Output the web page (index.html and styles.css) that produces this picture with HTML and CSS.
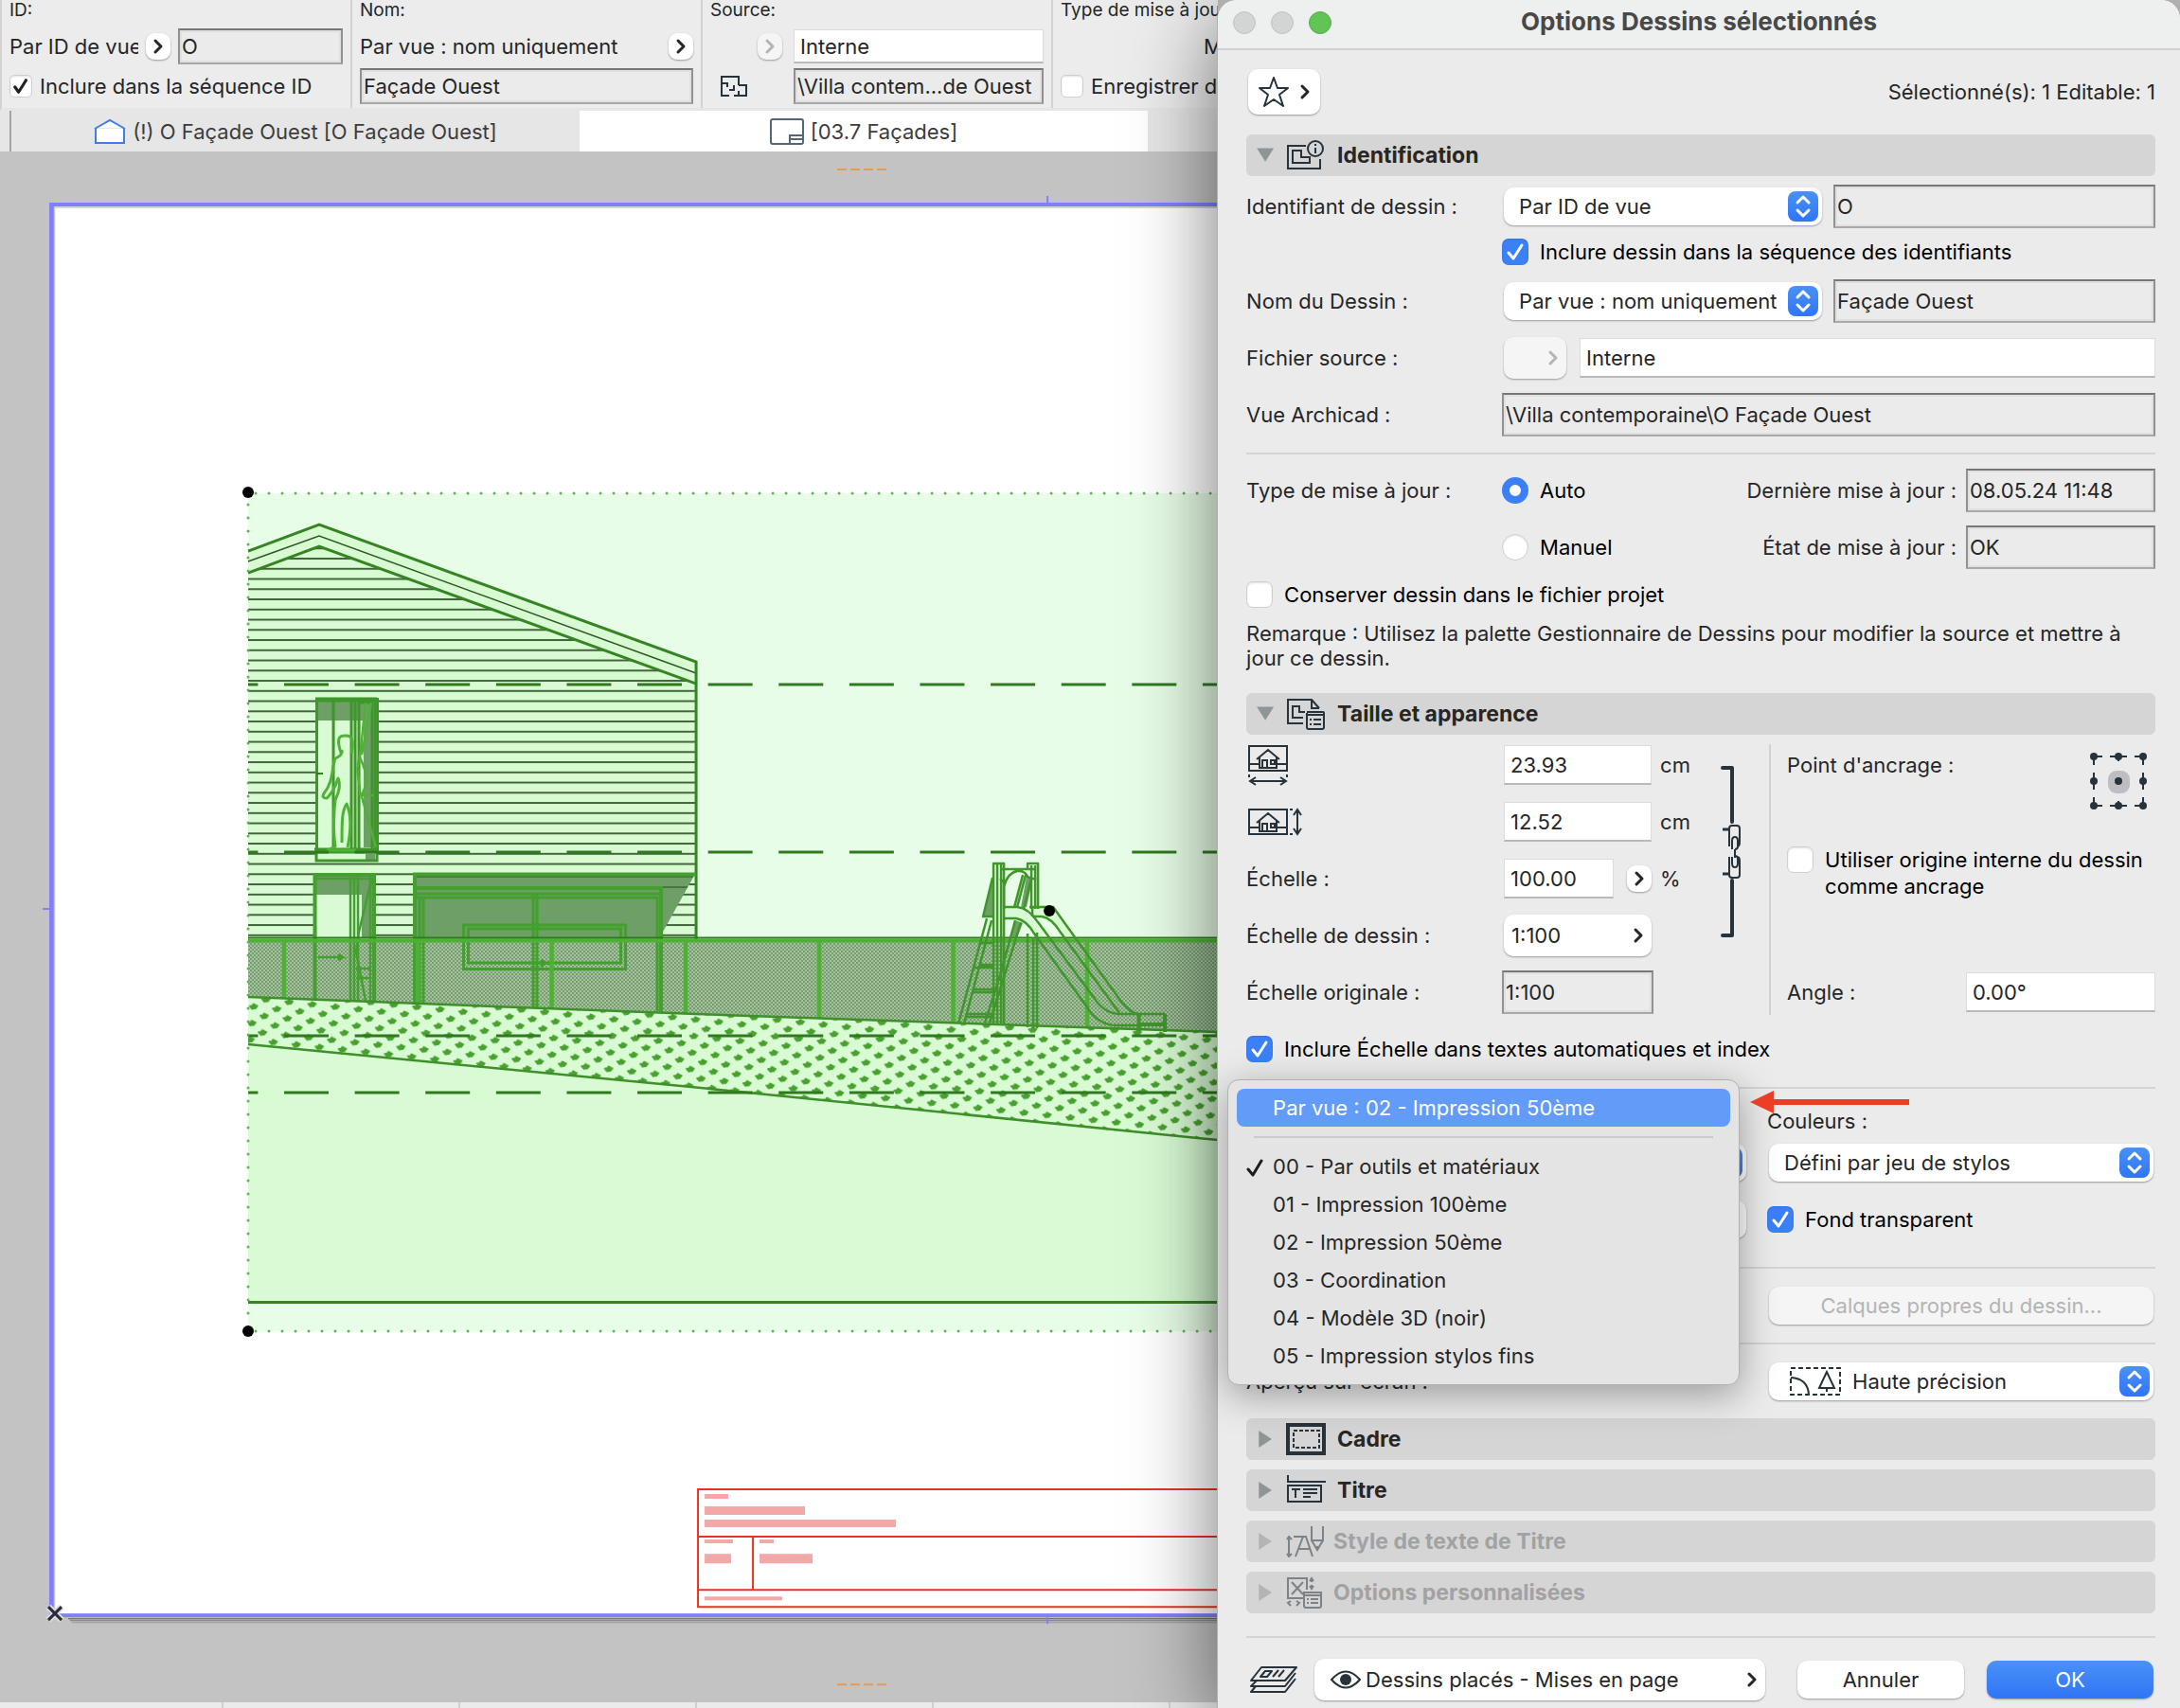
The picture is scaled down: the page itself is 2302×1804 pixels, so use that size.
FILE: index.html
```html
<!DOCTYPE html>
<html lang="fr">

<head>
    <meta charset="UTF-8">
    <meta name="viewport" content="width=device-width, initial-scale=1.0">
    <title>Options Dessins sélectionnés</title>
    <link rel="stylesheet" href="styles.css">
</head>

<body>
    <svg class="sprite" aria-hidden="true">
        <symbol id="chevron" viewBox="0 0 12 18">
            <path d="M3 3l6 6-6 6" fill="none" stroke="currentColor" stroke-width="3" stroke-linecap="round" stroke-linejoin="round" />
        </symbol>
        <symbol id="stepper" viewBox="0 0 32 32">
            <path d="M10 12l6-6 6 6M10 20l6 6 6-6" fill="none" stroke="#fff" stroke-width="3" stroke-linecap="round" stroke-linejoin="round" />
        </symbol>
        <symbol id="house" viewBox="0 0 42 28">
            <g fill="none" stroke="currentColor" stroke-width="2">
                <path d="M1 1h40v26H1zM1 20h10M31 20h10M9 15L21 5l12 10M12 13v11h18V13M15 24v-8h5v8M24 16h4v4h-4z" />
            </g>
        </symbol>
    </svg>

    <div class="app">
        <main class="workspace">
            <div class="infobar">
                <section class="info">
                    <h2>ID:</h2>
                    <div class="info-row">
                        <span class="info-text cut">Par ID de vue</span>
                        <button class="pill" aria-label="Choisir l'ID"><svg><use href="#chevron" /></svg></button>
                        <input class="sunken" type="text" value="O" aria-label="ID" readonly>
                    </div>
                    <label class="info-row">
                        <input class="check small dark" type="checkbox" checked>
                        <span>Inclure dans la séquence ID</span>
                    </label>
                </section>
                <section class="info">
                    <h2>Nom:</h2>
                    <div class="info-row">
                        <span class="info-text">Par vue : nom uniquement</span>
                        <button class="pill" aria-label="Choisir le nom"><svg><use href="#chevron" /></svg></button>
                    </div>
                    <div class="info-row">
                        <input class="sunken" type="text" value="Façade Ouest" aria-label="Nom" readonly>
                    </div>
                </section>
                <section class="info source">
                    <h2>Source:</h2>
                    <div class="info-row">
                        <button class="pill" aria-label="Choisir la source" disabled><svg><use href="#chevron" /></svg></button>
                        <input class="field" type="text" value="Interne" aria-label="Source">
                    </div>
                    <div class="info-row">
                        <svg class="plan-icon" viewBox="0 0 30 22">
                            <path d="M11 1H2v20h8M15 21h13V10h-8M15 1h5v9M11 1h4M2 8h6v4M15 10v5h-5M20 16v5" fill="none" stroke="#28323a" stroke-width="2" />
                        </svg>
                        <input class="sunken" type="text" value="\Villa contem...de Ouest" aria-label="Vue source" readonly>
                    </div>
                </section>
                <section class="info">
                    <h2>Type de mise à jour:</h2>
                    <div class="info-row update-kind">Manuel</div>
                    <label class="info-row">
                        <input class="check small" type="checkbox">
                        <span>Enregistrer dessin</span>
                    </label>
                </section>
            </div>

            <nav class="tabs">
                <a class="tab" href="#elevation">
                    <svg viewBox="0 0 34 28" width="34" height="28">
                        <path d="M2 10v16h30V10M1 11L17 2l16 9" fill="#fff" stroke="#3f7cf0" stroke-width="2" />
                    </svg>
                    (!) O Façade Ouest [O Façade Ouest]
                </a>
                <a class="tab active" href="#layout">
                    <svg viewBox="0 0 36 28" width="36" height="28">
                        <path d="M3 1h30q2 0 2 2v22q0 2-2 2H3q-2 0-2-2V3q0-2 2-2zM21 27v-9h14M21 22h14" fill="none" stroke="#536577" stroke-width="2" />
                    </svg>
                    [03.7 Façades]
                </a>
                <a class="tab" href="#more" aria-label="Onglet suivant"></a>
            </nav>

            <svg class="canvas" viewBox="0 160 1286 1638" preserveAspectRatio="xMinYMin slice" role="img" aria-label="Façade Ouest">
                <defs>
                    <pattern id="siding" width="20" height="10.75" patternUnits="userSpaceOnUse" y="589">
                        <rect width="20" height="2" fill="#41653a" />
                    </pattern>
                    <pattern id="mesh" width="4" height="4" patternUnits="userSpaceOnUse">
                        <rect width="4" height="4" fill="#a9cda2" />
                        <path d="M0 0h2v2H0zM2 2h2v2H2z" fill="#73936d" />
                    </pattern>
                    <pattern id="soil" width="24.5" height="17.6" patternUnits="userSpaceOnUse" patternTransform="translate(287 1061) rotate(6)">
                        <path id="tuft" d="M1 4l3-1 1-2 5 2-2 3-4 1z" fill="#49a02f" stroke="#49a02f" stroke-width="1" stroke-linejoin="round" />
                        <use href="#tuft" x="12.2" y="8.8" />
                    </pattern>
                    <clipPath id="wall">
                        <path d="M262 605L337 577 735 722V990H262z" />
                    </clipPath>
                </defs>

                <!-- sheet -->
                <rect x="52" y="214" width="1300" height="1494" fill="#8080fb" />
                <rect x="57" y="218" width="1300" height="1486" fill="#fff" />
                <path d="M57 219h1229M57.500 219V1700" stroke="#c8c8c8" stroke-width="1.500" fill="none" />
                <path d="M72 1709.500H1286" stroke="#5d5d5d" />
                <path d="M74 1711.500H1286" stroke="#777" />
                <path d="M76 1713.500H1286" stroke="#999" />
                <path d="M1106 207v7M1106 1708v7M45 960h7" stroke="#8080fb" stroke-width="2" />
                <path d="M884 179h52M884 1779h52" stroke="#e59a55" stroke-width="2" stroke-dasharray="10 4" />

                <!-- drawing area -->
                <rect x="262" y="521" width="1024" height="885" fill="#e8fde7" />
                <path d="M262 582L337 554 735 699V1071L1286 1090V1375H262z" fill="#d9fbd4" />

                <!-- house -->
                <rect x="262" y="570" width="473" height="420" fill="url(#siding)" clip-path="url(#wall)" />
                <path d="M262 593L337 566 735 711" fill="none" stroke="#2d5527" stroke-width="1.500" />
                <g fill="none" stroke="#368423" stroke-width="3">
                    <path d="M262 582L337 554 735 699V1071" />
                    <path d="M262 605L337 577 735 722" />
                </g>

                <!-- canopy and bay -->
                <path d="M438 923H734L700 984V994H438z" fill="#6e9f66" />
                <path d="M438 926H732M438 937H726" stroke="#3f6a37" stroke-width="1.500" />

                <!-- upper window -->
                <path d="M333 737h65v173h-65z" fill="#d9fbd4" />
                <path d="M335 740h62v21h-62zM384 761h12v134h-12zM386 902h10v7h-10z" fill="#6e9f66" />
                <g fill="none" stroke="#3f962b" stroke-width="3">
                    <path d="M334.500 738h62v162h-62zM334 900v9h64v-9M352 738v162M371 738v162M375 738v162M379 742v155h14V742zM333 740h64M332 897h65" />
                    <path d="M398 737v163" stroke-width="4" />
                </g>
                <g fill="none" stroke="#4fb236" stroke-width="3" stroke-linejoin="round">
                    <path d="M360 795C355 780 358 777 364 777C372 776 374 782 371 796M361 792Q362 798 354 801C350 812 352 826 342 838Q339 843 345 843Q352 837 357 822Q361 830 354 845C352 862 352 880 354 894L346 898H376M361 890C361 868 361 856 366 849C372 862 370 880 367 895" />
                    <path d="M380 798C374 815 381 825 380 840M382 797L392 742M381 838L397 895M380 800Q390 822 386 830L382 840H394M386 742L380 800" stroke-width="2.500" />
                </g>
                <path d="M334 817h7" stroke="#2f7a1e" stroke-width="2" />

                <!-- lower door -->
                <path d="M331 922h65v70h-65z" fill="#d9fbd4" />
                <path d="M334 925h61v20h-61zM382 945h12v46h-12z" fill="#6e9f66" />

                <!-- fence mesh -->
                <path d="M262 992H1286V1090L735 1071 262 1053z" fill="url(#mesh)" />

                <g fill="none" stroke="#43a02e" stroke-width="4">
                    <path d="M332.500 1055V924H395V1058" />
                    <path d="M334 928h60M370 924V1057M374 924V1057M378 926V1057M391 926V1057" stroke-width="2.500" />
                    <path d="M392 930L379 984 376 1005 386 1057M376 1023h16M376 1033h16M336 1011h26l-5-3m5 3l-5 3" stroke-width="2.500" />
                    <path d="M438 1060V923.500H735M438 938H698V1070" />
                    <path d="M440 944H697M440 948H694V1068M447 948V1062M563 944V1064M567 944V1064M443 948V1062" stroke-width="3" />
                    <path d="M489.500 977H660.500V1023.500H489.500zM494.500 981H655.500V1017H494.500z" stroke-width="3" />
                    <path d="M560 1017h16l-5-3m5 3l-5 4" stroke-width="3" />
                </g>

                <path d="M262 990.500H1286" stroke="#2f7a1e" stroke-width="2" />
                <path d="M262 993.500H1286" stroke="#4db234" stroke-width="4" />
                <path d="M300 993V1056M441 993V1062M582.500 993V1067M724 993V1072M865 993V1077M1006.500 993V1082M1148 993V1087" stroke="#4db234" stroke-width="4.500" />

                <!-- soil -->
                <path d="M262 1053L735 1071 1286 1090V1204L740 1149 262 1103z" fill="#d9fbd4" />
                <path d="M262 1053L735 1071 1286 1090V1204L740 1149 262 1103z" fill="url(#soil)" />
                <path d="M262 1053L735 1071 1286 1090M1286 1204L740 1149 262 1103" fill="none" stroke="#3f8f2a" stroke-width="2.500" />
                <path d="M262 1375.500H1286" stroke="#368423" stroke-width="3" />
                <path d="M262 723H1286M262 900H1286M262 1094H1286M262 1154H1286" stroke="#2f7a1e" stroke-width="3" stroke-dasharray="47 27.600" stroke-dashoffset="36.600" />

                <!-- playground slide -->
                <path d="M1048 928L1038 968H1048zM1084 925L1078 958H1084L1090 930zM1073 972L1068 990H1074L1080 975z" fill="#6e9f66" />
                <path d="M1060 958H1074Q1086 959 1096 974L1107 989H1093Q1083 971 1060 970zM1090 959H1114L1134 989H1123Q1106 968 1090 967z" fill="#d9fbd4" />
                <g fill="none" stroke="#3f962b" stroke-width="2.500" stroke-linejoin="round">
                    <path d="M1049 1082V912H1060V1083M1053 912V1082M1057 912V1083M1085 986V1085M1091 990V1086M1095 985V1086M1085 918V912H1096V960M1089 914V960M1093 914V960" />
                    <path d="M1057 918H1094M1056 928L1060 932V960M1060 936Q1064 922 1074 920Q1082 919 1085 926L1094 929" />
                    <path d="M1048 927L1038 968H1049M1042 970L1012 1081M1047 972L1018 1081M1034 996H1048M1034 1020H1048M1028 1022H1048M1036 1019H1048M1028 1045H1048M1026 1048H1048M1022 1071H1048M1021 1074H1048" />
                    <path d="M1083 924L1074 958M1089 928L1081 960M1080 924L1071 958M1078 974L1060 1032 1045 1080M1072 972L1056 1030 1040 1080" />
                    <path d="M1060 958H1074Q1086 959 1096 974L1156 1055Q1166 1070 1182 1071H1230" />
                    <path d="M1060 970H1073Q1084 972 1092 986L1148 1064Q1160 1083 1180 1083H1204" />
                    <path d="M1087 958H1112L1184 1058Q1194 1070 1204 1072M1090 968H1100Q1110 969 1120 985L1182 1070M1090 958V968" />
                    <path d="M1202.500 1071V1089M1230 1071V1090M1202 1082H1230" stroke-width="4" />
                </g>

                <path d="M270 521H1286M262 533V1400M270 1406H1286" stroke="#62b257" stroke-width="3" stroke-linecap="round" stroke-dasharray="0 14" />
                <g>
                    <circle cx="262" cy="520" r="6" />
                    <circle cx="1108" cy="962" r="6" />
                    <circle cx="262" cy="1406" r="6" />
                </g>

                <!-- title block -->
                <path d="M1286 1573H737V1697H1286M737 1623H1286M737 1679H1286M795 1623V1679" fill="none" stroke="#e93323" stroke-width="2" />
                <path d="M744 1578h25v5h-25zM744 1591h106v9h-106zM744 1605h202v8h-202zM744 1626h30v4h-30zM802 1626h15v4h-15zM744 1641h28v10h-28zM802 1641h56v10h-56zM744 1686h82v4h-82z" fill="#f1a8a6" />

                <path d="M51 1697l14 14M65 1697l-14 14" stroke="#ddd" stroke-width="7" />
                <path d="M51 1697l14 14M65 1697l-14 14" stroke="#2b2b40" stroke-width="3" />
            </svg>

            <div class="statusbar"><span></span><span></span><span></span><span></span><span></span></div>
        </main>

        <section class="dialog" role="dialog" aria-labelledby="dialog-title">
            <header class="titlebar">
                <div class="lights"><i></i><i></i><i class="on"></i></div>
                <h1 id="dialog-title">Options Dessins sélectionnés</h1>
            </header>

            <form class="content">
                <div class="top">
                    <button type="button" class="favorite" aria-label="Favoris">
                        <svg width="34" height="34" viewBox="0 0 34 34">
                            <path d="M17 2l4 11h11l-9 7 4 12-10-7-10 7 4-12-9-7h11z" fill="none" stroke="#28323a" stroke-width="2" stroke-linejoin="round" />
                        </svg>
                        <svg class="chev"><use href="#chevron" /></svg>
                    </button>
                    <span>Sélectionné(s): 1 Editable: 1</span>
                </div>

                <h2 class="panel-head open">
                    <i class="tri"></i>
                    <svg viewBox="0 0 42 34">
                        <path d="M21 7H2v24h34V21M7 12h9v7h9v6H7z" fill="none" stroke="#28323a" stroke-width="2" />
                        <circle cx="31" cy="10" r="8" fill="none" stroke="#28323a" stroke-width="2" />
                        <path d="M31 9v6M31 5v2" stroke="#28323a" stroke-width="2" />
                    </svg>
                    Identification
                </h2>
                <div class="group first">
                    <div class="row">
                        <label for="ident">Identifiant de dessin :</label>
                        <div class="pair">
                            <span class="select"><select id="ident"><option>Par ID de vue</option></select><svg><use href="#stepper" /></svg></span>
                            <input class="sunken" type="text" value="O" aria-label="Identifiant" readonly>
                        </div>
                    </div>
                    <div class="row short">
                        <label class="inline second"><input class="check" type="checkbox" checked>Inclure dessin dans la séquence des identifiants</label>
                    </div>
                    <div class="row">
                        <label for="nom">Nom du Dessin :</label>
                        <div class="pair">
                            <span class="select"><select id="nom"><option>Par vue : nom uniquement</option></select><svg><use href="#stepper" /></svg></span>
                            <input class="sunken" type="text" value="Façade Ouest" aria-label="Nom" readonly>
                        </div>
                    </div>
                    <div class="row">
                        <label for="fichier">Fichier source :</label>
                        <div class="file">
                            <button type="button" class="push" aria-label="Choisir le fichier" disabled><svg class="chev"><use href="#chevron" /></svg></button>
                            <input id="fichier" class="field" type="text" value="Interne">
                        </div>
                    </div>
                    <div class="row">
                        <label for="vue">Vue Archicad :</label>
                        <input id="vue" class="sunken" type="text" value="\Villa contemporaine\O Façade Ouest" readonly>
                    </div>
                </div>
                <hr>
                <div class="group">
                    <div class="row update">
                        <span>Type de mise à jour :</span>
                        <label class="inline"><input class="radio" type="radio" name="maj" checked>Auto</label>
                        <label class="end" for="derniere">Dernière mise à jour :</label>
                        <input id="derniere" class="sunken" type="text" value="08.05.24 11:48" readonly>
                    </div>
                    <div class="row update">
                        <label class="inline second"><input class="radio" type="radio" name="maj">Manuel</label>
                        <label class="end" for="etat">État de mise à jour :</label>
                        <input id="etat" class="sunken" type="text" value="OK" readonly>
                    </div>
                    <label class="inline keep"><input class="check" type="checkbox">Conserver dessin dans le fichier projet</label>
                    <p class="note">Remarque : Utilisez la palette Gestionnaire de Dessins pour modifier la source et mettre à jour ce dessin.</p>
                </div>

                <h2 class="panel-head open">
                    <i class="tri"></i>
                    <svg viewBox="0 0 42 34">
                        <path d="M18 27H2V2h25l8 9M27 2v9h8M18 21H7V9h7v6h6M22 15h17q1 0 1 1v15q0 2-2 2H24q-2 0-2-2V16M22 18h18M25 23h2M25 28h2M29 23h8M29 28h8" fill="none" stroke="#28323a" stroke-width="2" />
                    </svg>
                    Taille et apparence
                </h2>
                <div class="size">
                    <div class="size-rows">
                        <div class="row">
                            <label for="largeur" aria-label="Largeur">
                                <svg class="dim" width="46" height="46" viewBox="0 0 46 46">
                                    <use href="#house" x="2" y="2" width="42" height="28" />
                                    <path d="M3 33v3M43 33v3M5 40h36M10 36l-6 4 6 4M36 36l6 4-6 4" fill="none" stroke="currentColor" stroke-width="2" />
                                </svg>
                            </label>
                            <div class="value"><input id="largeur" class="field" type="text" value="23.93"><span>cm</span></div>
                        </div>
                        <div class="row">
                            <label for="hauteur" aria-label="Hauteur">
                                <svg class="dim" width="62" height="30" viewBox="0 0 62 30">
                                    <use href="#house" x="2" y="1" width="42" height="28" />
                                    <path d="M46 2h3M46 28h3M54 3v24M50 8l4-6 4 6M50 22l4 6 4-6" fill="none" stroke="currentColor" stroke-width="2" />
                                </svg>
                            </label>
                            <div class="value"><input id="hauteur" class="field" type="text" value="12.52"><span>cm</span></div>
                        </div>
                        <div class="row">
                            <label for="echelle">Échelle :</label>
                            <div class="value">
                                <input id="echelle" class="field narrow" type="text" value="100.00">
                                <button type="button" class="pill" aria-label="Choisir l'échelle"><svg><use href="#chevron" /></svg></button>
                                <span>%</span>
                            </div>
                        </div>
                        <div class="row">
                            <label for="echelle-dessin">Échelle de dessin :</label>
                            <button type="button" id="echelle-dessin" class="push scale">1:100<svg class="chev"><use href="#chevron" /></svg></button>
                        </div>
                        <div class="row">
                            <label for="originale">Échelle originale :</label>
                            <input id="originale" class="sunken scale" type="text" value="1:100" readonly>
                        </div>
                    </div>
                    <svg class="bracket" width="40" height="300" viewBox="0 0 40 300">
                        <g fill="none" stroke="#28323a">
                            <path d="M13 33h10v57M23 152v58H13" stroke-width="4" stroke-linejoin="round" stroke-linecap="round" />
                            <path d="M20 116V97q0-3 3-3h5q3 0 3 3v15q0 4-3 4M23 119v-9q0-4 3-4t3 4v6q0 3-3 3M26 119v9M20 127v19q0 3 3 3h5q3 0 3-3v-15q0-4-3-4M23 127v7q0 4 3 4t3-4v-5q0-3-3-3" stroke-width="2" />
                            <path d="M13 98h6M13 145h6" stroke-width="3" />
                        </g>
                    </svg>
                    <div class="anchor">
                        <div class="anchor-row">
                            <span>Point d'ancrage :</span>
                            <svg width="62" height="62" viewBox="0 0 62 62">
                                <rect x="20" y="20" width="23" height="24" rx="9" fill="#bdbdc2" />
                                <g fill="#28323a">
                                    <circle cx="5" cy="5" r="4" /><circle cx="31" cy="5" r="4" /><circle cx="57" cy="5" r="4" />
                                    <circle cx="5" cy="31" r="4" /><circle cx="31" cy="31" r="4" /><circle cx="57" cy="31" r="4" />
                                    <circle cx="5" cy="57" r="4" /><circle cx="31" cy="57" r="4" /><circle cx="57" cy="57" r="4" />
                                </g>
                                <path d="M5 5h9M22 5h18M48 5h9M5 57h9M22 57h18M48 57h9M5 5v9M5 22v18M5 48v9M57 5v9M57 22v18M57 48v9M31 5v5M31 52v5" stroke="#28323a" stroke-width="2" />
                            </svg>
                        </div>
                        <label class="inline origin"><input class="check" type="checkbox"><span>Utiliser origine interne du dessin comme ancrage</span></label>
                        <div class="angle">
                            <label for="angle">Angle :</label>
                            <input id="angle" class="field" type="text" value="0.00°">
                        </div>
                    </div>
                </div>
                <label class="inline include"><input class="check" type="checkbox" checked>Inclure Échelle dans textes automatiques et index</label>
                <hr>

                <div class="pens">
                    <div class="pens-left">
                        <span class="select"><select aria-label="Jeu de stylos"></select><svg><use href="#stepper" /></svg></span>
                        <button type="button" class="push" aria-label="Modifier les stylos"></button>
                        <div class="menu" role="menu">
                            <button type="button" class="selected" role="menuitem">Par vue : 02 - Impression 50ème</button>
                            <hr>
                            <button type="button" role="menuitem">
                                <svg width="20" height="20" viewBox="0 0 20 20"><path d="M3 11l5 6 9-15" fill="none" stroke="#1d1d1d" stroke-width="3" stroke-linecap="round" stroke-linejoin="round" /></svg>
                                00 - Par outils et matériaux</button>
                            <button type="button" role="menuitem">01 - Impression 100ème</button>
                            <button type="button" role="menuitem">02 - Impression 50ème</button>
                            <button type="button" role="menuitem">03 - Coordination</button>
                            <button type="button" role="menuitem">04 - Modèle 3D (noir)</button>
                            <button type="button" role="menuitem">05 - Impression stylos fins</button>
                        </div>
                        <svg class="arrow" width="170" height="26" viewBox="0 0 170 26">
                            <path d="M0 13L25 1v9h143v6H25v9z" fill="#ea3f25" />
                        </svg>
                    </div>
                    <div class="pens-right">
                        <label for="couleurs">Couleurs :</label>
                        <div class="row">
                            <span class="select"><select id="couleurs"><option>Défini par jeu de stylos</option></select><svg><use href="#stepper" /></svg></span>
                        </div>
                        <label class="inline row"><input class="check" type="checkbox" checked>Fond transparent</label>
                    </div>
                </div>
                <hr>
                <div class="half">
                    <button type="button" class="push layers" disabled>Calques propres du dessin...</button>
                </div>
                <hr>
                <div class="half">
                    <label for="apercu">Aperçu sur écran :</label>
                    <span class="select with-icon">
                        <select id="apercu"><option>Haute précision</option></select>
                        <svg class="preview" viewBox="0 0 54 30">
                            <path d="M1 1h52v28H1z" fill="none" stroke="#28323a" stroke-width="2" stroke-dasharray="5 3" />
                            <path d="M1 11q18 1 19 18M39 5l-8 17h16zM39 22v4" fill="none" stroke="#28323a" stroke-width="2" />
                        </svg>
                        <svg><use href="#stepper" /></svg>
                    </span>
                </div>

                <div class="closed">
                    <h2 class="panel-head">
                        <i class="tri"></i>
                        <svg viewBox="0 0 42 34">
                            <path d="M2 2h38v30H2z" fill="none" stroke="#28323a" stroke-width="4" />
                            <path d="M8 8h27v18H8z" fill="none" stroke="#28323a" stroke-width="2" stroke-dasharray="4 2" />
                        </svg>
                        Cadre
                    </h2>
                    <h2 class="panel-head">
                        <i class="tri"></i>
                        <svg viewBox="0 0 42 34">
                            <path d="M2 1v7h40M2 12h35v17H2zM6 16h9M10 16v9M18 16h15M18 20h15M18 24h8" fill="none" stroke="#28323a" stroke-width="2" />
                        </svg>
                        Titre
                    </h2>
                    <h2 class="panel-head off">
                        <i class="tri"></i>
                        <svg viewBox="0 0 42 34">
                            <path d="M3 12v21M1 15l2-3 3 3M1 30l2 3 3-3M8 12h10M10 33l8-21h3l7 21M13 25h12M27 1v15l6 10 6-10V1M27 16h12M33 22v4" fill="none" stroke="#28323a" stroke-width="2" />
                        </svg>
                        Style de texte de Titre
                    </h2>
                    <h2 class="panel-head off">
                        <i class="tri"></i>
                        <svg viewBox="0 0 42 34">
                            <path d="M18 23H2V2h20v12M6 6l12 13M18 6L6 19M27 2v4M27 9v4M25 5l2-3 2 3M25 10l2 3 2-3M19 17h18v14q0 2-2 2H21q-2 0-2-2zM19 20h18M22 24h2M22 28h2M26 24h8M26 28h8M5 26l-3 2 3 3M11 26l3 2-3 3" fill="none" stroke="#28323a" stroke-width="2" />
                        </svg>
                        Options personnalisées
                    </h2>
                </div>
                <hr>

                <footer class="actions">
                    <svg class="sheets" width="52" height="30" viewBox="0 0 52 30">
                        <path d="M13 2h37L38 16H2zM8 16l-6 6h36l11-14M7 22l-5 6h36l11-14M17 6h7l-5 6h-7zM31 5l-6 7M37 5l-6 7" fill="none" stroke="#28323a" stroke-width="2" stroke-linejoin="round" />
                    </svg>
                    <button type="button" class="push view">
                        <svg width="34" height="20" viewBox="0 0 34 20">
                            <path d="M2 10Q17-7 32 10Q17 27 2 10z" fill="none" stroke="#28323a" stroke-width="2" />
                            <circle cx="17" cy="10" r="6" fill="#28323a" />
                        </svg>
                        Dessins placés - Mises en page
                        <svg class="chev"><use href="#chevron" /></svg>
                    </button>
                    <button type="button" class="push cancel">Annuler</button>
                    <button type="submit" class="push primary">OK</button>
                </footer>
            </form>
        </section>
    </div>
</body>

</html>
```
FILE: styles.css
```css
* {
    padding: 0;
    margin: 0;
    box-sizing: border-box;
}

body {
    height: 100vh;
    overflow: hidden;
    background-color: #c3c3c3;
    color: #262626;
    font-family: Inter, "Liberation Sans", sans-serif;
    font-size: 22px;
    line-height: 28px;
}

input,
select,
button {
    font: inherit;
    color: inherit;
}

.sprite {
    display: none;
}

.app {
    height: 100%;
    display: grid;
    grid-template-columns: minmax(0, 633fr) minmax(0, 500fr);
}

/* shared controls */
.sunken,
.field {
    width: 100%;
    min-width: 0;
    border-radius: 0;
    outline: none;
}

.sunken {
    height: 46px;
    padding: 0 2px;
    background-color: #ebebeb;
    border: 2px solid #919191;
    border-top-color: #777;
    border-bottom-color: #a8a8a8;
    box-shadow: inset 0 0 0 2px #e0e0e0;
}

.field {
    height: 42px;
    padding: 0 6px;
    background-color: #fff;
    border: 1px solid #dcdcdc;
    border-bottom: 2px solid #b9b9b9;
}

.check,
.radio {
    appearance: none;
    flex: none;
    width: 28px;
    height: 28px;
    background: #fff center / 100% no-repeat;
    border: 1px solid #cfcfcf;
    border-radius: 7px;
    box-shadow: inset 0 1px 2px rgba(0, 0, 0, .12);
}

.check:checked {
    border: none;
    background-color: #3b80f7;
    background-image: url("data:image/svg+xml,%3Csvg xmlns='http://www.w3.org/2000/svg' viewBox='0 0 28 28'%3E%3Cpath d='M7 15l5 6 9-14' fill='none' stroke='white' stroke-width='3' stroke-linecap='round' stroke-linejoin='round'/%3E%3C/svg%3E");
}

.check.small {
    width: 24px;
    height: 24px;
    border-radius: 5px;
}

.check.dark:checked {
    border: 1px solid #cfcfcf;
    background-color: #fff;
    background-image: url("data:image/svg+xml,%3Csvg xmlns='http://www.w3.org/2000/svg' viewBox='0 0 28 28'%3E%3Cpath d='M6 15l5 7 10-16' fill='none' stroke='%23222' stroke-width='4' stroke-linecap='round' stroke-linejoin='round'/%3E%3C/svg%3E");
}

.radio {
    border-radius: 50%;
}

.radio:checked {
    border: 8px solid #3b80f7;
    box-shadow: none;
}

.pill {
    flex: none;
    width: 26px;
    height: 28px;
    display: flex;
    align-items: center;
    justify-content: center;
    background-color: #fff;
    border: none;
    border-radius: 9px;
    box-shadow: 0 1px 2px rgba(0, 0, 0, .35);
}

.pill svg,
.chev {
    flex: none;
    width: 12px;
    height: 18px;
}

.pill:disabled,
.push:disabled {
    background-color: #f5f5f5;
    color: #b4b4b4;
}

.push {
    height: 40px;
    padding: 0 8px;
    display: flex;
    align-items: center;
    justify-content: center;
    background-color: #fff;
    border: none;
    border-radius: 10px;
    box-shadow: 0 1px 2px rgba(0, 0, 0, .35);
}

.select {
    position: relative;
    display: block;
    min-width: 0;
}

.select select {
    appearance: none;
    display: block;
    width: 100%;
    height: 40px;
    padding: 0 40px 0 16px;
    background-color: #fff;
    border: none;
    border-radius: 10px;
    box-shadow: 0 1px 2px rgba(0, 0, 0, .35);
}

.select svg {
    position: absolute;
    right: 4px;
    top: 4px;
    width: 32px;
    height: 32px;
    border-radius: 8px;
    background-image: linear-gradient(#4a91f8, #2f75f6);
    pointer-events: none;
}

/* workspace */
.workspace {
    display: flex;
    flex-direction: column;
    overflow: hidden;
}

.infobar {
    flex: none;
    height: 117px;
    display: flex;
    background-color: #ececec;
    border-bottom: 3px solid #e6e6e6;
    border-left: 2px solid #d2d2d2;
}

.info {
    flex: 0 0 370px;
    padding: 0 8px;
    border-right: 2px solid #d2d2d2;
}

.info h2 {
    height: 28px;
    font-size: 19px;
    font-weight: 400;
    line-height: 22px;
    white-space: nowrap;
}

.info-row {
    height: 42px;
    display: flex;
    align-items: center;
    gap: 8px;
    white-space: nowrap;
}

.info-row .sunken {
    height: 38px;
}

.info-row .field {
    height: 36px;
}

.info-text {
    flex: 1;
    overflow: hidden;
}

.info-text.cut {
    flex: 0 0 136px;
}

.source .info-row {
    display: grid;
    grid-template-columns: 80px 1fr;
}

.source .pill {
    justify-self: end;
    margin-right: 4px;
}

.plan-icon {
    width: 30px;
    height: 22px;
    margin-left: 10px;
}

.update-kind {
    padding-left: 151px;
}

.tabs {
    flex: none;
    height: 43px;
    padding-left: 10px;
    display: flex;
    background-color: #e6e6e6;
}

.tab {
    flex: 0 0 600px;
    display: flex;
    align-items: center;
    justify-content: center;
    gap: 7px;
    color: #3c3c3c;
    text-decoration: none;
    white-space: nowrap;
}

.tab:first-child {
    flex-basis: 602px;
    border-left: 2px solid #a5a5a5;
}

.tab.active {
    background-color: #fff;
}

.canvas {
    flex: 1;
    min-height: 0;
    width: 100%;
}

.statusbar {
    flex: none;
    height: 6px;
    display: flex;
    background-color: #ebebeb;
}

.statusbar span {
    flex: 0 0 250px;
    border-right: 2px solid #d0d0d0;
}

.statusbar span:first-child {
    flex-basis: 236px;
}

/* dialog */
.dialog {
    position: relative;
    background-color: #ebebeb;
    border-radius: 20px 20px 0 0;
    box-shadow: 0 0 0 1px #b0b0b0, 0 20px 90px rgba(0, 0, 0, .55);
}

.titlebar {
    position: relative;
    height: 53px;
    display: flex;
    align-items: center;
    justify-content: center;
    padding-bottom: 6px;
    background-color: #eef0ef;
    border-bottom: 2px solid #cfd0cf;
    border-radius: 20px 20px 0 0;
}

.titlebar h1 {
    color: #484848;
    font-size: 26px;
    font-weight: 700;
}

.lights {
    position: absolute;
    left: 16px;
    top: 12px;
    display: flex;
    gap: 16px;
}

.lights i {
    width: 24px;
    height: 24px;
    border: 1px solid #bfc1c0;
    border-radius: 50%;
    background-color: #d3d5d4;
}

.lights .on {
    border-color: #57ad48;
    background-color: #61c454;
}

.content {
    padding: 20px 26px 0 30px;
}

.content hr {
    height: 2px;
    border: none;
    background-color: #d4d4d4;
}

.top {
    height: 69px;
    display: flex;
    align-items: flex-start;
    justify-content: space-between;
    line-height: 48px;
}

.favorite {
    width: 76px;
    height: 48px;
    margin-left: 2px;
    display: flex;
    align-items: center;
    justify-content: center;
    gap: 10px;
    background-color: #fff;
    border: none;
    border-radius: 10px;
    box-shadow: 0 1px 2px rgba(0, 0, 0, .35);
}

.panel-head {
    height: 44px;
    padding-left: 11px;
    display: flex;
    align-items: center;
    background-color: #d5d5d5;
    border-radius: 6px;
    font-size: 23px;
    font-weight: 700;
}

.panel-head svg {
    width: 42px;
    height: 34px;
    margin: 0 12px 0 13px;
}

.tri {
    width: 18px;
    height: 18px;
    background-color: #8f9496;
    clip-path: polygon(12% 0, 88% 50%, 12% 100%);
}

.open .tri {
    clip-path: polygon(0 8%, 100% 8%, 50% 88%);
}

.off {
    color: #a2a2a2;
}

.off svg,
.off .tri {
    opacity: .5;
}

.off svg {
    margin-right: 8px;
}

.group.first {
    padding: 2px 0 10px;
}

.group {
    padding: 8px 0 24px;
}

.row {
    min-height: 60px;
    display: grid;
    grid-template-columns: 270px minmax(0, 1fr);
    align-items: center;
}

.row.short {
    min-height: 36px;
    margin-bottom: 4px;
}

.second {
    grid-column: 2;
}

.inline {
    display: flex;
    align-items: center;
    gap: 12px;
    color: #000;
}

.pair {
    display: grid;
    grid-template-columns: 336px minmax(0, 1fr);
    gap: 12px;
    padding-left: 2px;
    align-items: center;
}

.file {
    display: grid;
    grid-template-columns: 66px minmax(0, 1fr);
    gap: 14px;
    padding-left: 2px;
    align-items: center;
}

.file .push {
    height: 44px;
    justify-content: flex-end;
}

.row.update {
    grid-template-columns: 270px 130px minmax(0, 1fr) 200px;
}

.end {
    padding-right: 10px;
    text-align: right;
    white-space: nowrap;
}

.keep {
    height: 40px;
}

.note {
    margin-top: 8px;
    line-height: 26px;
}

.size {
    padding-top: 2px;
    display: grid;
    grid-template-columns: 490px 62px minmax(0, 1fr);
}

.dim {
    display: block;
    color: #28323a;
}

.value {
    display: flex;
    align-items: center;
    padding-left: 2px;
}

.value .field {
    flex: none;
    width: 156px;
    margin-right: 9px;
}

.value .narrow {
    width: 116px;
    margin-right: 14px;
}

.value .pill {
    margin-right: 9px;
}

.scale {
    width: 160px;
}

.push.scale {
    height: 44px;
    width: 156px;
    margin-left: 2px;
    justify-content: space-between;
}

.anchor {
    margin: 8px 0 6px;
    padding-left: 17px;
    display: flex;
    flex-direction: column;
    border-left: 2px solid #d2d2d2;
}

.anchor-row {
    display: flex;
    justify-content: space-between;
    padding-right: 8px;
    line-height: 44px;
}

.anchor-row svg {
    margin-top: 8px;
}

.origin {
    margin-top: 38px;
    align-items: flex-start;
}

.angle {
    height: 48px;
    margin-top: auto;
    display: grid;
    grid-template-columns: minmax(0, 1fr) 200px;
    align-items: center;
}

.include {
    height: 60px;
    margin-bottom: 10px;
}

.pens {
    display: grid;
    grid-template-columns: 550px minmax(0, 1fr);
    padding-bottom: 20px;
}

.pens-left {
    position: relative;
    padding: 58px 22px 0 272px;
}

.pens-left .push {
    width: 100%;
    margin-top: 20px;
}

.pens-right {
    padding-top: 20px;
}

.pens-right .row {
    grid-template-columns: minmax(0, 1fr);
}

.pens-right .select {
    margin: 0 2px;
}

.pens-right .inline.row {
    display: flex;
}

.menu {
    position: absolute;
    left: -20px;
    top: -10px;
    width: 541px;
    height: 323px;
    padding: 9px;
    background-color: #e4e4e4;
    border: 1px solid #b2b2b2;
    border-radius: 12px;
    box-shadow: 0 10px 40px rgba(0, 0, 0, .35);
    z-index: 2;
}

.menu button {
    position: relative;
    width: 100%;
    height: 40px;
    padding-left: 38px;
    display: block;
    background: none;
    border: none;
    border-radius: 8px;
    text-align: left;
}

.menu .selected {
    background-color: #639bf8;
    color: #fff;
}

.menu button svg {
    position: absolute;
    left: 9px;
    top: 12px;
}

.menu hr {
    margin: 10px 18px;
    background-color: #cacaca;
}

.arrow {
    position: absolute;
    left: 532px;
    top: 1px;
    z-index: 3;
}

.half {
    height: 78px;
    padding-right: 2px;
    display: grid;
    grid-template-columns: 552px minmax(0, 1fr);
    align-items: center;
}

.layers {
    grid-column: 2;
}

.with-icon select {
    padding-left: 88px;
}

.select .preview {
    left: 22px;
    width: 54px;
    height: 30px;
    top: 5px;
    background: none;
    border-radius: 0;
}

.closed {
    display: grid;
    gap: 10px;
    margin-bottom: 24px;
}

.actions {
    padding-top: 22px;
    display: grid;
    grid-template-columns: 48px minmax(0, 1fr) 176px 176px;
    gap: 24px;
    align-items: center;
    margin-right: 2px;
}

.sheets {
    margin-left: 3px;
}

.view {
    height: 44px;
    justify-content: flex-start;
    gap: 4px;
    padding-left: 16px;
    margin-right: 10px;
    white-space: nowrap;
}

.view .chev {
    margin-left: auto;
}

.primary {
    color: #fff;
    background-image: linear-gradient(#4a91f8, #2f75f6);
}
```
